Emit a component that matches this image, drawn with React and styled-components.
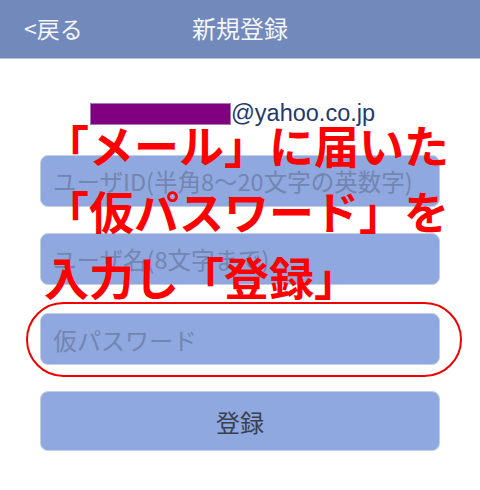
import React from "react";
import styled, { createGlobalStyle } from "styled-components";

const Global = createGlobalStyle`
  html, body { margin: 0; padding: 0; background: #ffffff; }
  body { font-family: "Noto Sans CJK JP", "Noto Sans", sans-serif; }
`;

const Page = styled.div`
  position: relative;
  width: 480px;
  height: 490px;
  overflow: hidden;
  background: #ffffff;
`;

const Header = styled.header`
  display: grid;
  grid-template-columns: 1fr auto 1fr;
  align-items: center;
  height: 58px;
  background: #7189bb;
  border-bottom: 1px solid #b7c2da;
  color: #f4f6fb;
`;

const Back = styled.span`
  padding-left: 24px;
  font-size: 23px;
  line-height: 1;
  padding-bottom: 2px;
`;

const Title = styled.h1`
  margin: 0;
  font-size: 24px;
  font-weight: 400;
  line-height: 1;
  padding-bottom: 2px;
`;

const Form = styled.main`
  display: flex;
  flex-direction: column;
  gap: 26px;
  padding: 39px 40px 0;
`;

const EmailRow = styled.div`
  display: flex;
  align-items: center;
  justify-content: center;
  height: 32px;
  margin-bottom: -1px;
  padding-right: 15px;
`;

const Masked = styled.span`
  width: 139px;
  height: 20px;
  background: #800080;
  border: 1px solid #a57bb5;
`;

const Domain = styled.span`
  font-family: "Liberation Sans", Arial, sans-serif;
  font-size: 23.5px;
  color: #243a6e;
  line-height: 1;
`;

const Field = styled.div`
  display: flex;
  align-items: center;
  height: ${(p) => p.$h || 52}px;
  box-sizing: border-box;
  padding-left: 12px;
  background: #8fa8df;
  border: 1px solid #c3cde3;
  border-radius: 8px;
  font-size: ${(p) => p.$size || 23.5}px;
  color: #7385b0;
  justify-content: ${(p) => (p.$center ? "center" : "flex-start")};
  ${(p) => p.$center && "padding-left: 0; color: #3a3f50; font-size: 24px;"}
`;

const Highlight = styled.div`
  position: relative;
  margin-top: 2px;
`;

const Oval = styled.div`
  position: absolute;
  left: -14px;
  right: -22px;
  top: -11px;
  bottom: -12px;
  border: 2px solid #f00000;
  border-radius: 38px;
  pointer-events: none;
`;

const Annotation = styled.div`
  position: absolute;
  left: 44px;
  top: 112px;
  font-family: "Noto Sans CJK JP", sans-serif;
  font-weight: 700;
  font-size: 45px;
  line-height: 66px;
  color: #ff0000;
  white-space: pre;
`;

export default function App() {
  return (
    <>
      <Global />
      <Page>
        <Header>
          <Back>&lt;戻る</Back>
          <Title>新規登録</Title>
          <span />
        </Header>
        <Form>
          <EmailRow>
            <Masked />
            <Domain>@yahoo.co.jp</Domain>
          </EmailRow>
          <Field>ユーザID(半角8〜20文字の英数字)</Field>
          <Field>ユーザ名(8文字まで)</Field>
          <Highlight>
            <Field $size={24}>仮パスワード</Field>
            <Oval />
          </Highlight>
          <Field $h={60} $center>登録</Field>
        </Form>
        <Annotation>
          {"「メール」に届いた\n「仮パスワード」を\n入力し「登録」"}
        </Annotation>
      </Page>
    </>
  );
}
